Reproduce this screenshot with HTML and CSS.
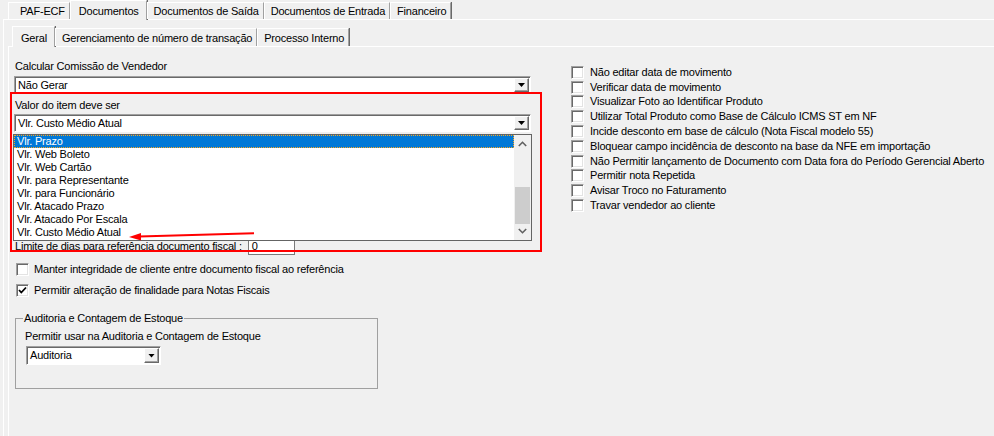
FILE: index.html
```html
<!DOCTYPE html>
<html lang="pt-BR">

<head>
    <meta charset="UTF-8">
    <meta name="viewport" content="width=device-width, initial-scale=1.0">
    <title>Configurações - Documentos</title>
    <link rel="stylesheet" href="styles.css">
</head>

<body>
    <div class="window">
        <!-- abas principais -->
        <ul class="tabs outer-tabs">
            <li class="tab first">PAF-ECF</li>
            <li class="tab active">Documentos</li>
            <li class="tab">Documentos de Saída</li>
            <li class="tab">Documentos de Entrada</li>
            <li class="tab">Financeiro</li>
        </ul>

        <div class="sheet outer-sheet">
            <ul class="tabs inner-tabs">
                <li class="tab active">Geral</li>
                <li class="tab">Gerenciamento de número de transação</li>
                <li class="tab">Processo Interno</li>
            </ul>

            <div class="sheet inner-sheet">
                <div class="columns">
                    <div class="col-left">
                        <div class="caption">Calcular Comissão de Vendedor</div>
                        <div class="combo wide">
                            <span class="combo-text">Não Gerar</span>
                            <span class="combo-btn"><i class="tri"></i></span>
                        </div>

                        <div class="caption second">Valor do item deve ser</div>
                        <div class="combo wide">
                            <span class="combo-text">Vlr. Custo Médio Atual</span>
                            <span class="combo-btn"><i class="tri"></i></span>

                            <!-- lista aberta do combo -->
                            <div class="dropdown">
                                <ul class="options">
                                    <li class="selected">Vlr. Prazo</li>
                                    <li>Vlr. Web Boleto</li>
                                    <li>Vlr. Web Cartão</li>
                                    <li>Vlr. para Representante</li>
                                    <li>Vlr. para Funcionário</li>
                                    <li>Vlr. Atacado Prazo</li>
                                    <li>Vlr. Atacado Por Escala</li>
                                    <li>Vlr. Custo Médio Atual</li>
                                </ul>
                                <div class="scrollbar">
                                    <svg class="chev up" width="9" height="6" viewBox="0 0 9 6">
                                        <polyline points="0.8,5 4.5,1.3 8.2,5" fill="none" stroke="#606060" stroke-width="1.6" />
                                    </svg>
                                    <div class="thumb"></div>
                                    <svg class="chev down" width="9" height="6" viewBox="0 0 9 6">
                                        <polyline points="0.8,1 4.5,4.7 8.2,1" fill="none" stroke="#606060" stroke-width="1.6" />
                                    </svg>
                                </div>
                            </div>
                        </div>

                        <div class="limit-row">
                            <span>Limite de dias para referência documento fiscal :</span>
                            <span class="num-input">0</span>
                        </div>

                        <div class="check-row left-check">
                            <span class="check"></span>
                            <span>Manter integridade de cliente entre documento fiscal ao referência</span>
                        </div>
                        <div class="check-row left-check second-check">
                            <span class="check">
                                <svg width="11" height="11" viewBox="0 0 11 11">
                                    <polyline points="2,5 4.3,7.5 9,2.5" fill="none" stroke="#000" stroke-width="1.8" />
                                </svg>
                            </span>
                            <span>Permitir alteração de finalidade para Notas Fiscais</span>
                        </div>

                        <fieldset class="group">
                            <legend>Auditoria e Contagem de Estoque</legend>
                            <div class="caption inner">Permitir usar na Auditoria e Contagem de Estoque</div>
                            <div class="combo small">
                                <span class="combo-text">Auditoria</span>
                                <span class="combo-btn"><i class="tri"></i></span>
                            </div>
                        </fieldset>
                    </div>

                    <div class="col-right">
                        <div class="check-row"><span class="check"></span><span>Não editar data de movimento</span></div>
                        <div class="check-row"><span class="check"></span><span>Verificar data de movimento</span></div>
                        <div class="check-row"><span class="check"></span><span>Visualizar Foto ao Identificar Produto</span></div>
                        <div class="check-row"><span class="check"></span><span>Utilizar Total Produto como Base de Cálculo ICMS ST em NF</span></div>
                        <div class="check-row"><span class="check"></span><span>Incide desconto em base de cálculo (Nota Fiscal modelo 55)</span></div>
                        <div class="check-row"><span class="check"></span><span>Bloquear campo incidência de desconto na base da NFE em importação</span></div>
                        <div class="check-row"><span class="check"></span><span>Não Permitir lançamento de Documento com Data fora do Período Gerencial Aberto</span></div>
                        <div class="check-row"><span class="check"></span><span>Permitir nota Repetida</span></div>
                        <div class="check-row"><span class="check"></span><span>Avisar Troco no Faturamento</span></div>
                        <div class="check-row"><span class="check"></span><span>Travar vendedor ao cliente</span></div>
                    </div>
                </div>

                <!-- marcação em vermelho sobre a tela -->
                <div class="highlight"></div>
                <svg class="arrow" width="134" height="14" viewBox="0 0 134 14">
                    <line x1="13" y1="8.6" x2="128" y2="5.2" stroke="#f00" stroke-width="2" />
                    <polygon points="3,9 15,5 15,12.5" fill="#f00" />
                </svg>
            </div>
        </div>
    </div>
</body>

</html>
```

FILE: styles.css
```css
* {
    box-sizing: border-box;
}

html,
body {
    margin: 0;
    height: 436px;
    overflow: hidden;
}

body {
    background: #f0f0f0;
    color: #000;
    font-family: "Liberation Sans", Arial, sans-serif;
    font-size: 11px;
    line-height: 13px;
    letter-spacing: -0.2px;
}

.window {
    display: flex;
    flex-direction: column;
    height: 100%;
    padding-left: 3px;
}

/* abas */
.tabs {
    list-style: none;
    margin: 0;
    display: flex;
    align-items: flex-end;
    position: relative;
    z-index: 1;
}

.outer-tabs {
    height: 19px;
    padding: 0 0 0 5px;
}

.inner-tabs {
    height: 20px;
    padding: 0 0 0 4px;
}

.tab {
    height: 17px;
    padding: 2px 4px 0 6px;
    white-space: nowrap;
    border-top: 1px solid #fff;
    border-left: 1px solid #fff;
    border-right: 1px solid #a0a0a0;
    box-shadow: 1px 0 0 #696969;
}

.outer-tabs .tab.first {
    padding-left: 11px;
}

.tab.active {
    height: 20px;
    margin-bottom: -1px;
    padding-top: 4px;
    padding-left: 8px;
    padding-right: 7px;
    background: #f0f0f0;
}

.inner-tabs .tab {
    height: 18px;
    padding-top: 3px;
}

.inner-tabs .tab.active {
    height: 21px;
    padding-top: 5px;
}

/* folhas */
.sheet {
    border-top: 1px solid #fff;
    border-left: 1px solid #fff;
    flex: 1;
}

.outer-sheet {
    display: flex;
    flex-direction: column;
    padding: 6px 0 0 4px;
}

.inner-sheet {
    position: relative;
    padding: 13px 0 0 6px;
}

.columns {
    display: grid;
    grid-template-columns: 518px 1fr;
    column-gap: 38px;
}

.caption {
    height: 13px;
}

.caption.second {
    margin-top: 5px;
}

/* combos */
.combo {
    position: relative;
    display: flex;
    height: 18px;
    margin-top: 3px;
    background: #fff;
    border: 1px solid;
    border-color: #a0a0a0 #fff #fff #a0a0a0;
    box-shadow: inset 1px 1px 0 #696969;
}

.caption.second + .combo {
    margin-top: 2px;
}

.combo.wide {
    width: 517px;
    margin-left: -1px;
}

.combo.small {
    width: 135px;
    height: 19px;
    margin-left: 3px;
}

.combo-text {
    flex: 1;
    padding: 2px 0 0 3px;
}

.combo-btn {
    width: 15px;
    margin: 1px 1px 1px 0;
    background: #f0f0f0;
    border: 1px solid;
    border-color: #fff #696969 #696969 #fff;
    box-shadow: inset -1px -1px 0 #a0a0a0;
    display: flex;
    align-items: center;
    justify-content: center;
}

.tri {
    display: block;
    width: 7px;
    height: 4px;
    background: #000;
    clip-path: polygon(0 0, 100% 0, 50% 100%);
}

/* lista aberta */
.dropdown {
    position: absolute;
    top: calc(100% + 3px);
    left: -2px;
    width: 519px;
    height: 107px;
    display: flex;
    background: #fff;
    border: 1px solid #646464;
    z-index: 2;
}

.options {
    list-style: none;
    margin: 0;
    padding: 0;
    flex: 1;
}

.options li {
    height: 13px;
    padding-left: 3px;
    white-space: nowrap;
}

.options li.selected {
    background: #0078d7;
    color: #fff;
    outline: 1px dotted #f5a623;
    outline-offset: -1px;
}

.scrollbar {
    position: relative;
    width: 17px;
    background: #f0f0f0;
}

.chev {
    position: absolute;
    left: 4px;
}

.chev.up {
    top: 6px;
}

.chev.down {
    bottom: 6px;
}

.thumb {
    position: absolute;
    top: 52px;
    left: 1px;
    width: 15px;
    height: 37px;
    background: #cdcdcd;
}

.limit-row {
    display: flex;
    align-items: center;
    height: 16px;
    margin-top: 106px;
}

.num-input {
    width: 47px;
    height: 17px;
    margin-left: 6px;
    padding: 1px 0 0 3px;
    background: #fff;
    border: 1px solid #7a7a7a;
}

/* caixas de seleção */
.check-row {
    display: flex;
    align-items: center;
    gap: 6px;
    height: 14.8px;
    white-space: nowrap;
}

.check {
    width: 13px;
    height: 13px;
    flex: none;
    display: flex;
    align-items: center;
    justify-content: center;
    background: #fff;
    border: 1px solid;
    border-color: #a0a0a0 #fff #fff #a0a0a0;
    box-shadow: inset 1px 1px 0 #696969, inset -1px -1px 0 #e3e3e3;
}

.left-check {
    height: 13px;
    margin-top: 9px;
    padding-left: 1px;
    gap: 5px;
}

.left-check.second-check {
    margin-top: 8px;
}

.col-right {
    padding-top: 5px;
}

/* grupo */
.group {
    width: 363px;
    height: 77px;
    margin: 15px 0 0 0;
    padding: 5px 8px 0 7px;
    border: 1px solid #a0a0a0;
}

.group legend {
    padding: 0 1px;
    line-height: 13px;
}

.caption.inner {
    margin-left: 2px;
}

/* marcação vermelha */
.highlight {
    position: absolute;
    left: 1px;
    top: 45px;
    width: 532px;
    height: 160px;
    border: 2px solid #f00;
    z-index: 3;
    pointer-events: none;
}

.arrow {
    position: absolute;
    left: 117px;
    top: 181px;
    z-index: 4;
}
```
